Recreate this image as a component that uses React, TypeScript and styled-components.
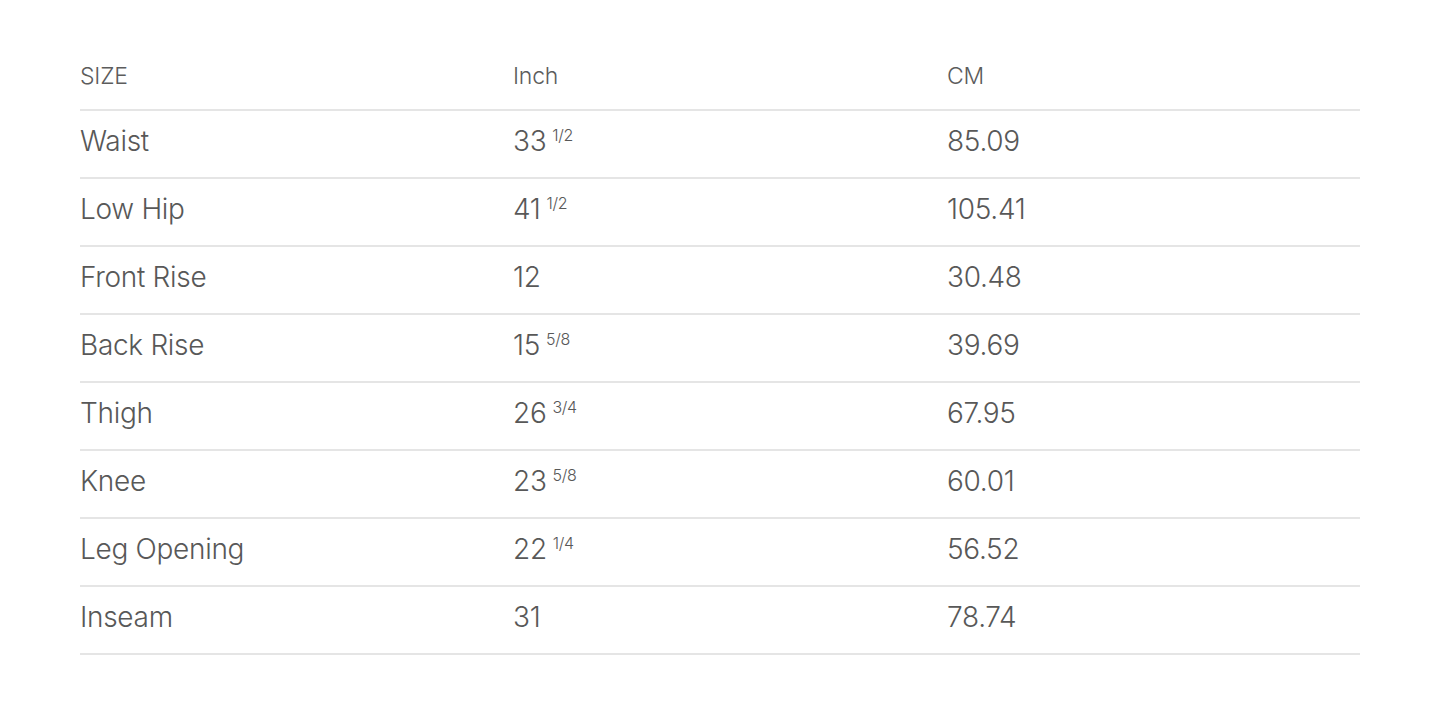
import React from "react";
import styled, { createGlobalStyle } from "styled-components";

const Global = createGlobalStyle`
  html, body { margin: 0; padding: 0; background: #fff; }
  body { font-family: "Inter", "Liberation Sans", sans-serif; }
`;

const Page = styled.div`
  padding: 43px 80px 0 80px;
`;

const Table = styled.div`
  display: flex;
  flex-direction: column;
  width: 1280px;
`;

const Row = styled.div`
  display: grid;
  grid-template-columns: 433px 434px 1fr;
  align-items: center;
  height: 66px;
  border-bottom: 2px solid #e5e5e5;
  box-sizing: content-box;
`;

const HeadCell = styled.div`
  font-size: 23px;
  font-weight: 300;
  color: #5c5c5c;
  letter-spacing: -0.2px;
`;

const Cell = styled.div`
  font-size: 28px;
  font-weight: 300;
  color: #585858;
  letter-spacing: -0.3px;
  padding-bottom: 6px;
`;

const Frac = styled.sup`
  font-size: 16px;
  margin-left: 6px;
  vertical-align: 10px;
  line-height: 0;
`;

type R = { name: string; inch: string; frac?: string; cm: string };

const rows: R[] = [
  { name: "Waist", inch: "33", frac: "1/2", cm: "85.09" },
  { name: "Low Hip", inch: "41", frac: "1/2", cm: "105.41" },
  { name: "Front Rise", inch: "12", cm: "30.48" },
  { name: "Back Rise", inch: "15", frac: "5/8", cm: "39.69" },
  { name: "Thigh", inch: "26", frac: "3/4", cm: "67.95" },
  { name: "Knee", inch: "23", frac: "5/8", cm: "60.01" },
  { name: "Leg Opening", inch: "22", frac: "1/4", cm: "56.52" },
  { name: "Inseam", inch: "31", cm: "78.74" },
];

export default function App() {
  return (
    <>
      <Global />
      <Page>
        <Table>
          <Row>
            <HeadCell>SIZE</HeadCell>
            <HeadCell>Inch</HeadCell>
            <HeadCell>CM</HeadCell>
          </Row>
          {rows.map((r) => (
            <Row key={r.name}>
              <Cell>{r.name}</Cell>
              <Cell>
                {r.inch}
                {r.frac && <Frac>{r.frac}</Frac>}
              </Cell>
              <Cell>{r.cm}</Cell>
            </Row>
          ))}
        </Table>
      </Page>
    </>
  );
}
